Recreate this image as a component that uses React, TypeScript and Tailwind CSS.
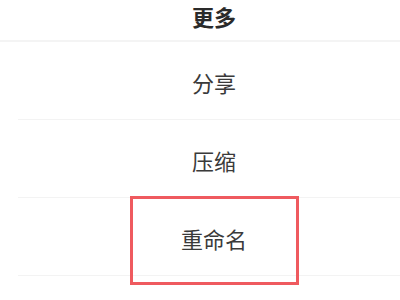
import React from "react";

const font = { fontFamily: '"Noto Sans CJK SC", "Noto Sans", sans-serif' };

export default function App() {
  const items = ["分享", "压缩", "重命名"];
  return (
    <div className="relative w-[400px] h-[300px] bg-white overflow-hidden" style={font}>
      <div className="h-[42px] flex items-center justify-center pl-[28px] border-b-2 border-[#f4f4f4]">
        <span className="text-[22px] font-bold text-[#2a2a2a] leading-none mt-[-8px]">更多</span>
      </div>
      {items.map((t) => (
        <div key={t} className="h-[78px] flex items-center justify-center border-b border-[#f3f3f3] ml-[18px] pl-[10px]">
          <span className="text-[22px] text-[#3a3a3a] leading-none mt-[2px]">{t}</span>
        </div>
      ))}
      <div className="absolute left-[130px] top-[196px] w-[169px] h-[89px] border-[3px] border-[#ef5a5f]" />
    </div>
  );
}
